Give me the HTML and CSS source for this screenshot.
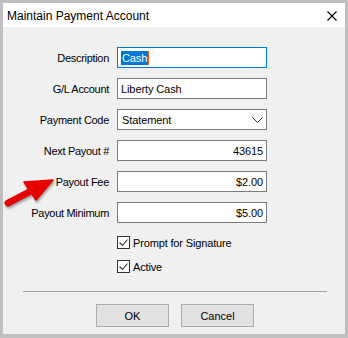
FILE: index.html
```html
<!DOCTYPE html>
<html lang="en">
<head>
    <meta charset="UTF-8">
    <title>Maintain Payment Account</title>
    <link rel="stylesheet" href="styles.css">
</head>
<body>

    <div class="window">
        <div class="titlebar">
            <span class="title">Maintain Payment Account</span>
            <svg class="close" width="10" height="10" viewBox="0 0 10 10">
                <path d="M0.5 0.5 L9.5 9.5 M9.5 0.5 L0.5 9.5" stroke="#000" stroke-width="1.1"/>
            </svg>
        </div>

        <div class="content">
            <div class="form">
                <label>Description</label>
                <div class="field focused"><span class="selected">Cash</span></div>

                <label>G/L Account</label>
                <div class="field">Liberty Cash</div>

                <label>Payment Code</label>
                <div class="field select">
                    <span>Statement</span>
                    <svg width="11" height="6" viewBox="0 0 11 6">
                        <path d="M0.5 0.5 L5.5 5.5 L10.5 0.5" fill="none" stroke="#333" stroke-width="1"/>
                    </svg>
                </div>

                <label>Next Payout #</label>
                <div class="field number">43615</div>

                <label>Payout Fee</label>
                <div class="field number">$2.00</div>

                <label>Payout Minimum</label>
                <div class="field number">$5.00</div>
            </div>

            <div class="checks">
                <div class="check-row">
                    <span class="box">
                        <svg width="11" height="11" viewBox="0 0 11 11">
                            <path d="M1.5 5.5 L4.5 8.5 L9.5 2.5" fill="none" stroke="#333" stroke-width="1.1"/>
                        </svg>
                    </span>
                    <span>Prompt for Signature</span>
                </div>
                <div class="check-row">
                    <span class="box">
                        <svg width="11" height="11" viewBox="0 0 11 11">
                            <path d="M1.5 5.5 L4.5 8.5 L9.5 2.5" fill="none" stroke="#333" stroke-width="1.1"/>
                        </svg>
                    </span>
                    <span>Active</span>
                </div>
            </div>

            <div class="separator"></div>

            <div class="buttons">
                <button>OK</button>
                <button>Cancel</button>
            </div>
        </div>

        <!-- annotation arrow pointing at Payout Fee -->
        <svg class="pointer" width="56" height="36" viewBox="0 0 56 36">
            <line x1="5" y1="28" x2="30" y2="15" stroke="#e60000" stroke-width="7" stroke-linecap="round"/>
            <path d="M50 5 L21 7 L33 25 Z" fill="#e60000" stroke="#e60000" stroke-width="1.5" stroke-linejoin="round"/>
        </svg>
    </div>

</body>
</html>
```

FILE: styles.css
```css
body {
    margin: 0;
    background-color: #bfbfbf;
    font-family: 'Liberation Sans', Arial, sans-serif;
    font-size: 11px;
    color: #000;
}

.window {
    position: relative;
    margin: 3px;
    width: 342px;
    height: 331px;
    background-color: #f0f0f0;
}

.titlebar {
    height: 24px;
    background-color: #fff;
    display: flex;
    align-items: center;
    justify-content: space-between;
    padding: 0 8px 0 4px;
}

.title {
    font-size: 12px;
    margin-top: 1px;
}

.close {
    margin-top: 1px;
}

.content {
    padding-top: 20px;
}

.form {
    display: grid;
    grid-template-columns: 106px 150px;
    grid-auto-rows: 21px;
    column-gap: 8px;
    row-gap: 10px;
}

.form label {
    align-self: center;
    text-align: right;
    letter-spacing: -0.3px;
}

.field {
    box-sizing: border-box;
    height: 21px;
    background-color: #fff;
    border: 1px solid #7a7a7a;
    padding: 0 3px;
    display: flex;
    align-items: center;
    letter-spacing: -0.1px;
}

.field.focused {
    border-color: #0078d7;
}

.selected {
    background-color: #0078d7;
    color: #fff;
    line-height: 14px;
    padding: 0 1px;
    border-right: 1px solid #f7630c;
}

.field.select {
    justify-content: space-between;
    padding: 0 3px 0 4px;
}

.field.number {
    justify-content: flex-end;
}

.checks {
    margin-top: 13px;
    padding-left: 114px;
    display: flex;
    flex-direction: column;
    gap: 11px;
    letter-spacing: -0.15px;
}

.check-row {
    display: flex;
    align-items: center;
    height: 13px;
    gap: 3px;
}

.box {
    box-sizing: border-box;
    width: 13px;
    height: 13px;
    border: 1px solid #333;
    background-color: #fff;
    display: flex;
}

.separator {
    margin: 18px 0 0 20px;
    width: 304px;
    height: 1px;
    background-color: #a0a0a0;
}

.buttons {
    margin-top: 12px;
    display: flex;
    justify-content: center;
    gap: 12px;
    padding-left: 2px;
}

button {
    box-sizing: border-box;
    width: 73px;
    height: 23px;
    background-color: #e1e1e1;
    border: 1px solid #adadad;
    font-family: 'Liberation Sans', Arial, sans-serif;
    font-size: 11px;
    color: #000;
    padding: 0;
}

.pointer {
    position: absolute;
    left: 0;
    top: 172px;
    filter: drop-shadow(1px 2px 1px rgba(0, 0, 0, 0.35));
}
```
